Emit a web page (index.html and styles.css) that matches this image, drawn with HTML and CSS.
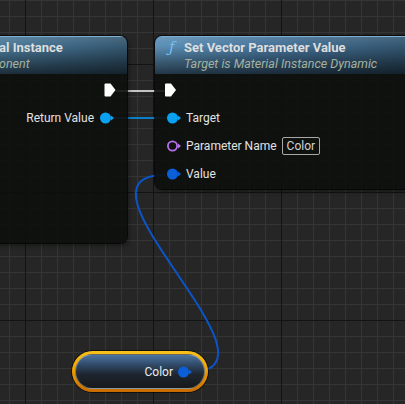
FILE: index.html
```html
<!DOCTYPE html>
<html>
<head>
<meta charset="utf-8">
<link rel="stylesheet" href="styles.css">
</head>
<body>
<div class="canvas">
  <svg class="wires" width="405" height="404" viewBox="0 0 405 404">
    <line x1="116" y1="91" x2="165" y2="91" stroke="#c4c4c4" stroke-width="2"/>
    <line x1="114" y1="118" x2="167" y2="118" stroke="#0a7ec8" stroke-width="2"/>
    <path d="M189,372 C299,372 55,175 165,175" fill="none" stroke="#0b55c8" stroke-width="2"/>
  </svg>

  <div class="node node-left">
    <div class="header">
      <div class="title">al Instance</div>
      <div class="subtitle">onent</div>
    </div>
    <div class="body">
      <div class="row row-right">
        <svg class="exec" width="12" height="14" viewBox="0 0 12 14"><path d="M0.5,1.5 Q0.5,0.5 1.5,0.5 L6.5,0.5 L11.5,7 L6.5,13.5 L1.5,13.5 Q0.5,13.5 0.5,12.5 Z" fill="#ffffff"/></svg>
      </div>
      <div class="row row-right">
        <span class="label">Return Value</span>
        <svg class="pin" width="14" height="12" viewBox="0 0 14 12"><circle cx="5.5" cy="6" r="5.5" fill="#0aa2f0"/><path d="M11,3.5 L14,6 L11,8.5 Z" fill="#0aa2f0"/></svg>
      </div>
    </div>
  </div>

  <div class="node node-right">
    <div class="header">
      <div class="title-line"><span class="fn">ƒ</span><span class="title">Set Vector Parameter Value</span></div>
      <div class="subtitle">Target is Material Instance Dynamic</div>
    </div>
    <div class="body">
      <div class="row row-exec">
        <svg class="exec" width="13" height="14" viewBox="0 0 12 14"><path d="M0.5,1.5 Q0.5,0.5 1.5,0.5 L6.5,0.5 L11.5,7 L6.5,13.5 L1.5,13.5 Q0.5,13.5 0.5,12.5 Z" fill="#ffffff"/></svg>
        <svg class="exec" width="13" height="14" viewBox="0 0 12 14"><path d="M1,1.5 Q1,1 1.5,1 L6.3,1 L11,7 L6.3,13 L1.5,13 Q1,13 1,12.5 Z" fill="none" stroke="#ffffff" stroke-width="1.3"/></svg>
      </div>
      <div class="row row-in">
        <svg class="pin" width="14" height="12" viewBox="0 0 14 12"><circle cx="5.5" cy="6" r="5.5" fill="#0aa2f0"/><path d="M11,3.5 L14,6 L11,8.5 Z" fill="#0aa2f0"/></svg>
        <span class="label">Target</span>
      </div>
      <div class="row row-in">
        <svg class="pin" width="14" height="12" viewBox="0 0 14 12"><circle cx="5.5" cy="6" r="4.6" fill="none" stroke="#b471e6" stroke-width="1.8"/><path d="M11,3.5 L14,6 L11,8.5 Z" fill="#b471e6"/></svg>
        <span class="label">Parameter Name</span>
        <span class="input">Color</span>
      </div>
      <div class="row row-in">
        <svg class="pin" width="14" height="12" viewBox="0 0 14 12"><circle cx="5.5" cy="6" r="5.5" fill="#0b5fd8"/><path d="M11,3.5 L14,6 L11,8.5 Z" fill="#0b5fd8"/></svg>
        <span class="label">Value</span>
      </div>
    </div>
  </div>

  <div class="var-node">
    <div class="var-inner">
      <span class="label">Color</span>
      <svg class="pin" width="14" height="12" viewBox="0 0 14 12"><circle cx="5.5" cy="6" r="5.5" fill="#0b5fd8"/><path d="M11,3.5 L14,6 L11,8.5 Z" fill="#0b5fd8"/></svg>
    </div>
  </div>
</div>
</body>
</html>
```

FILE: styles.css
```css
html, body {
  margin: 0;
  padding: 0;
  width: 405px;
  height: 404px;
  overflow: hidden;
}

body {
  font-family: Roboto, "Noto Sans", "Liberation Sans", sans-serif;
  background-color: #262626;
}

.canvas {
  position: relative;
  width: 405px;
  height: 404px;
  overflow: hidden;
  background-color: #262626;
  background-image:
    linear-gradient(90deg, #131313 1px, transparent 1px),
    linear-gradient(0deg, #131313 1px, transparent 1px),
    linear-gradient(90deg, #353535 1px, transparent 1px),
    linear-gradient(0deg, #353535 1px, transparent 1px);
  background-size: 128px 128px, 128px 128px, 16px 16px, 16px 16px;
  background-position: 25px 0, 0 65px, 9px 0, 0 1px;
}

.wires {
  position: absolute;
  left: 0;
  top: 0;
  z-index: 1;
}

.node {
  position: absolute;
  top: 36px;
  display: flex;
  flex-direction: column;
  border-radius: 7px;
  background: rgba(13, 15, 13, 0.9);
  box-shadow: 0 0 0 1px rgba(0, 0, 0, 0.7), 2px 3px 4px rgba(0, 0, 0, 0.35);
  overflow: hidden;
  z-index: 2;
}

.node-left {
  left: -10px;
  width: 137px;
  height: 207px;
}

.node-right {
  left: 155px;
  width: 280px;
  height: 153px;
}

.header {
  height: 38px;
  box-sizing: border-box;
  padding-top: 2px;
  background:
    linear-gradient(180deg, rgba(255, 255, 255, 0.10) 0%, rgba(0, 0, 0, 0) 25%, rgba(0, 0, 0, 0.35) 65%, rgba(0, 0, 0, 0.62) 100%),
    linear-gradient(90deg, #5c90b6 0%, #46739a 40%, #2e4f66 100%);
  border-top: 1px solid #7fb0d0;
}

.node-left .header {
  padding-left: 9px;
  background:
    linear-gradient(180deg, rgba(255, 255, 255, 0.10) 0%, rgba(0, 0, 0, 0) 25%, rgba(0, 0, 0, 0.35) 65%, rgba(0, 0, 0, 0.62) 100%),
    linear-gradient(90deg, #4c7c9c 0%, #3d6683 60%, #34576f 100%);
}

.node-right .header {
  padding-left: 12px;
}

.title-line {
  display: flex;
  align-items: center;
  height: 17px;
}

.fn {
  width: 17px;
  padding-left: 2px;
  box-sizing: border-box;
  font-family: "DejaVu Serif", "Liberation Serif", serif;
  font-style: italic;
  font-size: 15px;
  color: #7bbcee;
  line-height: 17px;
}

.title {
  font-size: 13px;
  font-weight: bold;
  color: #dedede;
  line-height: 17px;
  white-space: nowrap;
}

.subtitle {
  font-size: 12.5px;
  font-style: italic;
  color: #a3b2a0;
  line-height: 16px;
  white-space: nowrap;
}

.node-right .subtitle {
  padding-left: 17px;
}

.body {
  display: flex;
  flex-direction: column;
  padding-top: 2px;
}

.row {
  height: 28px;
  display: flex;
  align-items: center;
}

.row-right {
  justify-content: flex-end;
  padding-right: 13px;
  gap: 6px;
}

.node-left .row-right:first-child {
  padding-right: 11px;
}

.row-exec {
  justify-content: space-between;
  padding-left: 9px;
  padding-right: 15px;
}

.row-in {
  padding-left: 12px;
  gap: 5px;
}

.label {
  font-size: 12px;
  color: #e2e2e2;
  white-space: nowrap;
}

.pin, .exec {
  display: block;
  flex: none;
}

.input {
  margin-left: 0;
  padding: 0 4px;
  height: 16px;
  line-height: 16px;
  font-size: 12px;
  color: #d4d4d4;
  border: 1px solid #a8a8a8;
  border-radius: 2px;
}

.var-node {
  position: absolute;
  left: 72px;
  top: 351px;
  width: 136px;
  height: 41px;
  box-sizing: border-box;
  padding: 3px;
  border-radius: 21px;
  background: linear-gradient(180deg, #f7c21a 0%, #eea100 45%, #c96a00 100%);
  box-shadow: 0 0 0 1px rgba(0, 0, 0, 0.6);
  z-index: 2;
}

.var-inner {
  height: 100%;
  box-sizing: border-box;
  border-radius: 18px;
  border: 1px solid rgba(210, 200, 170, 0.45);
  background: linear-gradient(180deg, #4c74a0 0%, #304a68 30%, #1e2630 58%, #17191b 100%);
  display: flex;
  align-items: center;
  justify-content: flex-end;
  padding-right: 12px;
  gap: 5px;
}

.var-inner .label {
  color: #ececec;
}
```
